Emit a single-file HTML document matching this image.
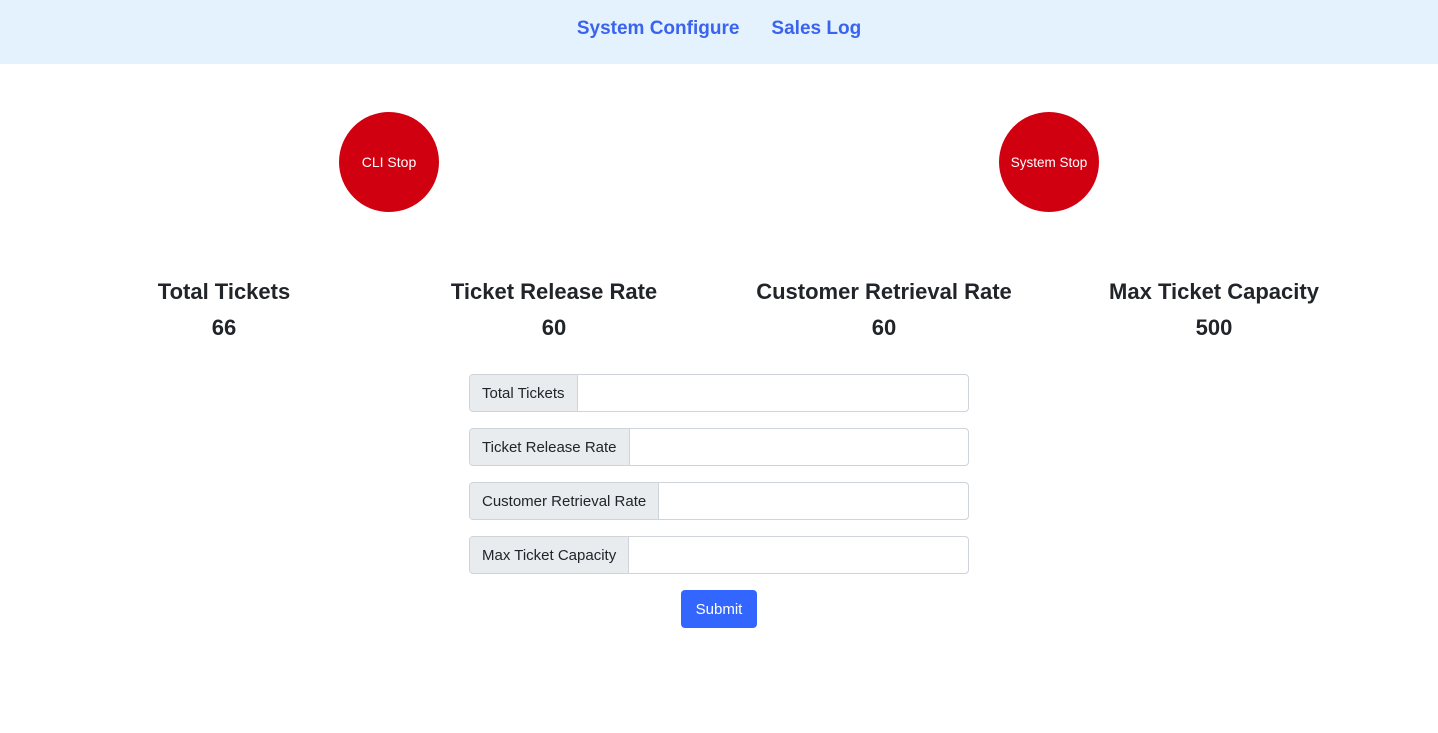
<!DOCTYPE html>
<html><head><style>
body{margin:0;font-family:"Liberation Sans",sans-serif;background:#fff;color:#212529;width:1438px;height:733px;overflow:hidden;position:relative}
.nav{height:64px;background:#e3f2fd;display:flex;justify-content:center;align-items:center;gap:32px}
.nav a{color:#3a63f0;font-size:19px;font-weight:bold;text-decoration:none;position:relative;top:-3px}
.c{position:absolute;width:100px;height:100px;border-radius:50%;background:#d10010;color:#fff;font-size:14px;display:flex;align-items:center;justify-content:center;top:112px;white-space:nowrap}
.st{position:absolute;width:330px;text-align:center;top:278px}
.st .h{font-size:22px;font-weight:bold;line-height:28px}
.st .v{font-size:22px;font-weight:bold;margin-top:8px;line-height:28px}
.ig{position:absolute;left:469px;width:500px;height:38px;display:flex;border:1px solid #ced4da;border-radius:4px;box-sizing:border-box;overflow:hidden}
.ig span{background:#e9ecef;border-right:1px solid #ced4da;padding:0 12px;font-size:15px;line-height:37px;white-space:nowrap}
.btn{position:absolute;left:681px;top:590px;width:76px;height:38px;background:#3366ff;color:#fff;border-radius:4px;font-size:15px;display:flex;align-items:center;justify-content:center}
</style></head><body>
<div class="nav"><a>System Configure</a><a>Sales Log</a></div>
<div class="c" style="left:339px">CLI Stop</div>
<div class="c" style="left:999px;font-size:13.5px">System Stop</div>
<div class="st" style="left:59px"><div class="h">Total Tickets</div><div class="v">66</div></div>
<div class="st" style="left:389px"><div class="h">Ticket Release Rate</div><div class="v">60</div></div>
<div class="st" style="left:719px"><div class="h">Customer Retrieval Rate</div><div class="v">60</div></div>
<div class="st" style="left:1049px"><div class="h">Max Ticket Capacity</div><div class="v">500</div></div>
<div class="ig" style="top:374px"><span>Total Tickets</span></div>
<div class="ig" style="top:428px"><span>Ticket Release Rate</span></div>
<div class="ig" style="top:482px"><span>Customer Retrieval Rate</span></div>
<div class="ig" style="top:536px"><span>Max Ticket Capacity</span></div>
<div class="btn">Submit</div>
</body></html>
